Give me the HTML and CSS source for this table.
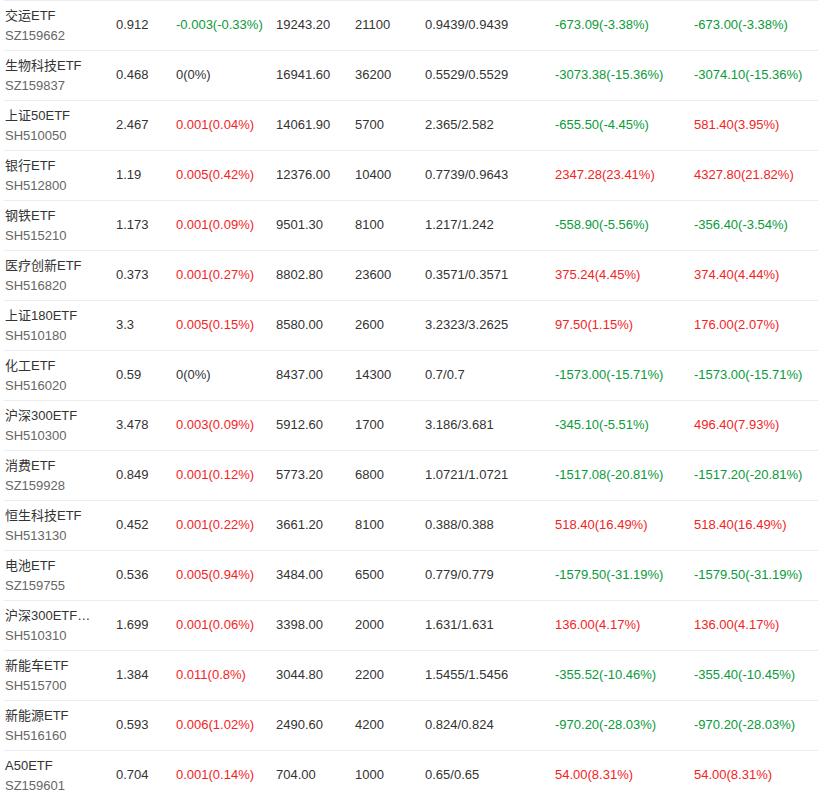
FILE: index.html
```html
<!DOCTYPE html>
<html lang="zh-CN">
<head>
<meta charset="utf-8">
<title>ETF持仓</title>
<link rel="stylesheet" href="styles.css">
</head>
<body>
<div class="list">
  <div class="row"><div class="c name"><div class="nm">交运ETF</div><div class="code">SZ159662</div></div><div class="c">0.912</div><div class="c down">-0.003(-0.33%)</div><div class="c">19243.20</div><div class="c">21100</div><div class="c">0.9439/0.9439</div><div class="c down">-673.09(-3.38%)</div><div class="c down">-673.00(-3.38%)</div></div>
  <div class="row"><div class="c name"><div class="nm">生物科技ETF</div><div class="code">SZ159837</div></div><div class="c">0.468</div><div class="c">0(0%)</div><div class="c">16941.60</div><div class="c">36200</div><div class="c">0.5529/0.5529</div><div class="c down">-3073.38(-15.36%)</div><div class="c down">-3074.10(-15.36%)</div></div>
  <div class="row"><div class="c name"><div class="nm">上证50ETF</div><div class="code">SH510050</div></div><div class="c">2.467</div><div class="c up">0.001(0.04%)</div><div class="c">14061.90</div><div class="c">5700</div><div class="c">2.365/2.582</div><div class="c down">-655.50(-4.45%)</div><div class="c up">581.40(3.95%)</div></div>
  <div class="row"><div class="c name"><div class="nm">银行ETF</div><div class="code">SH512800</div></div><div class="c">1.19</div><div class="c up">0.005(0.42%)</div><div class="c">12376.00</div><div class="c">10400</div><div class="c">0.7739/0.9643</div><div class="c up">2347.28(23.41%)</div><div class="c up">4327.80(21.82%)</div></div>
  <div class="row"><div class="c name"><div class="nm">钢铁ETF</div><div class="code">SH515210</div></div><div class="c">1.173</div><div class="c up">0.001(0.09%)</div><div class="c">9501.30</div><div class="c">8100</div><div class="c">1.217/1.242</div><div class="c down">-558.90(-5.56%)</div><div class="c down">-356.40(-3.54%)</div></div>
  <div class="row"><div class="c name"><div class="nm">医疗创新ETF</div><div class="code">SH516820</div></div><div class="c">0.373</div><div class="c up">0.001(0.27%)</div><div class="c">8802.80</div><div class="c">23600</div><div class="c">0.3571/0.3571</div><div class="c up">375.24(4.45%)</div><div class="c up">374.40(4.44%)</div></div>
  <div class="row"><div class="c name"><div class="nm">上证180ETF</div><div class="code">SH510180</div></div><div class="c">3.3</div><div class="c up">0.005(0.15%)</div><div class="c">8580.00</div><div class="c">2600</div><div class="c">3.2323/3.2625</div><div class="c up">97.50(1.15%)</div><div class="c up">176.00(2.07%)</div></div>
  <div class="row"><div class="c name"><div class="nm">化工ETF</div><div class="code">SH516020</div></div><div class="c">0.59</div><div class="c">0(0%)</div><div class="c">8437.00</div><div class="c">14300</div><div class="c">0.7/0.7</div><div class="c down">-1573.00(-15.71%)</div><div class="c down">-1573.00(-15.71%)</div></div>
  <div class="row"><div class="c name"><div class="nm">沪深300ETF</div><div class="code">SH510300</div></div><div class="c">3.478</div><div class="c up">0.003(0.09%)</div><div class="c">5912.60</div><div class="c">1700</div><div class="c">3.186/3.681</div><div class="c down">-345.10(-5.51%)</div><div class="c up">496.40(7.93%)</div></div>
  <div class="row"><div class="c name"><div class="nm">消费ETF</div><div class="code">SZ159928</div></div><div class="c">0.849</div><div class="c up">0.001(0.12%)</div><div class="c">5773.20</div><div class="c">6800</div><div class="c">1.0721/1.0721</div><div class="c down">-1517.08(-20.81%)</div><div class="c down">-1517.20(-20.81%)</div></div>
  <div class="row"><div class="c name"><div class="nm">恒生科技ETF</div><div class="code">SH513130</div></div><div class="c">0.452</div><div class="c up">0.001(0.22%)</div><div class="c">3661.20</div><div class="c">8100</div><div class="c">0.388/0.388</div><div class="c up">518.40(16.49%)</div><div class="c up">518.40(16.49%)</div></div>
  <div class="row"><div class="c name"><div class="nm">电池ETF</div><div class="code">SZ159755</div></div><div class="c">0.536</div><div class="c up">0.005(0.94%)</div><div class="c">3484.00</div><div class="c">6500</div><div class="c">0.779/0.779</div><div class="c down">-1579.50(-31.19%)</div><div class="c down">-1579.50(-31.19%)</div></div>
  <div class="row"><div class="c name"><div class="nm">沪深300ETF…</div><div class="code">SH510310</div></div><div class="c">1.699</div><div class="c up">0.001(0.06%)</div><div class="c">3398.00</div><div class="c">2000</div><div class="c">1.631/1.631</div><div class="c up">136.00(4.17%)</div><div class="c up">136.00(4.17%)</div></div>
  <div class="row"><div class="c name"><div class="nm">新能车ETF</div><div class="code">SH515700</div></div><div class="c">1.384</div><div class="c up">0.011(0.8%)</div><div class="c">3044.80</div><div class="c">2200</div><div class="c">1.5455/1.5456</div><div class="c down">-355.52(-10.46%)</div><div class="c down">-355.40(-10.45%)</div></div>
  <div class="row"><div class="c name"><div class="nm">新能源ETF</div><div class="code">SH516160</div></div><div class="c">0.593</div><div class="c up">0.006(1.02%)</div><div class="c">2490.60</div><div class="c">4200</div><div class="c">0.824/0.824</div><div class="c down">-970.20(-28.03%)</div><div class="c down">-970.20(-28.03%)</div></div>
  <div class="row"><div class="c name"><div class="nm">A50ETF</div><div class="code">SZ159601</div></div><div class="c">0.704</div><div class="c up">0.001(0.14%)</div><div class="c">704.00</div><div class="c">1000</div><div class="c">0.65/0.65</div><div class="c up">54.00(8.31%)</div><div class="c up">54.00(8.31%)</div></div>
</div>
</body>
</html>
```

FILE: styles.css
```css
html, body {
  margin: 0;
  padding: 0;
  background: #fff;
}
body {
  font-family: "Liberation Sans", Arial, "Noto Sans CJK SC", sans-serif;
  font-size: 13px;
  color: #333;
}
.list {
  margin-left: 4px;
}
.row {
  display: grid;
  grid-template-columns: 112px 60px 100px 79px 70px 130px 139px 1fr;
  height: 49px;
  border-top: 1px solid #ebebf2;
  align-items: center;
}
.c {
  white-space: nowrap;
  line-height: 20px;
  padding-bottom: 2px;
}
.name {
  align-self: start;
  padding: 5px 0 0 1px;
}
.nm {
  white-space: nowrap;
  color: #333;
}
.code {
  color: #666;
}
.up {
  color: #f2241f;
}
.down {
  color: #0a9a3a;
}
```
